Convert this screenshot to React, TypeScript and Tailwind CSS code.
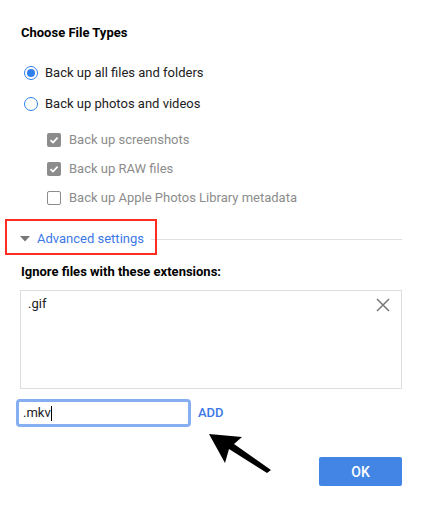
import React from "react";

const Radio = ({ checked, label }: { checked?: boolean; label: string }) => (
  <div className="flex h-[31px] items-center">
    <span className="ml-[4px] flex h-[14px] w-[14px] items-center justify-center rounded-full border-[1.5px] border-[#2f80ed]">
      {checked && <span className="h-[8px] w-[8px] rounded-full bg-[#2f80ed]" />}
    </span>
    <span className="ml-[7px]">{label}</span>
  </div>
);

const Check = ({ checked, label }: { checked?: boolean; label: string }) => (
  <div className="flex h-[29px] items-center">
    <span
      className={
        checked
          ? "ml-[27px] flex h-[14px] w-[14px] items-center justify-center rounded-[2px] bg-[#8c8c8c]"
          : "ml-[27px] h-[14px] w-[14px] rounded-[2px] border border-[#8c8c8c] bg-white"
      }
    >
      {checked && (
        <svg width="10" height="10" viewBox="0 0 10 10">
          <path d="M1.5 5.2 L4 7.6 L8.6 2.6" fill="none" stroke="white" strokeWidth="1.7" />
        </svg>
      )}
    </span>
    <span className="ml-[8px] text-[#8c8c8c]">{label}</span>
  </div>
);

export default function App() {
  return (
    <div className="relative h-[508px] w-[422px] overflow-hidden bg-white font-['Roboto',sans-serif] text-[13px] leading-[18px] text-[#212121]">
      <div className="px-[20px] pt-[24px]">
        <h2 className="pl-px text-[13px] font-bold leading-[18px] text-black">Choose File Types</h2>

        <div className="mt-[15px]">
          <Radio checked label="Back up all files and folders" />
          <Radio label="Back up photos and videos" />
        </div>

        <div className="mt-[6px]">
          <Check checked label="Back up screenshots" />
          <Check checked label="Back up RAW files" />
          <Check label="Back up Apple Photos Library metadata" />
        </div>

        <div className="relative mt-[13px] flex h-[28px] items-center">
          <svg width="10" height="6" viewBox="0 0 10 6" className="shrink-0">
            <path d="M0 0 L10 0 L5 5.5 Z" fill="#777" />
          </svg>
          <span className="ml-[7px] text-[#3b78e7]">Advanced settings</span>
          <span className="ml-[7px] h-px flex-1 bg-[#e0e0e0]" />
          <span className="absolute left-[-15px] top-[-6px] h-[36px] w-[152px] border-2 border-[#ff2d1f]" />
        </div>

        <div className="mt-[10px] pl-px font-bold text-black">Ignore files with these extensions:</div>

        <div className="relative mt-[9px] h-[99px] border border-[#dedede] px-[7px] pt-[4px]">
          <span>.gif</span>
          <svg width="14" height="14" viewBox="0 0 14 14" className="absolute right-[11px] top-[7px]">
            <path d="M1 1 L13 13 M13 1 L1 13" stroke="#777" strokeWidth="1.5" />
          </svg>
        </div>

        <div className="mt-[10px] flex items-center">
          <div className="-ml-[4px] flex h-[28px] w-[175px] items-center rounded-[4px] border-[3px] border-[#86aff2] px-[4px]">
            <span>.mkv</span>
            <span className="h-[15px] w-px bg-black" />
          </div>
          <button className="ml-[7px] font-medium text-[#3b78e7]">ADD</button>
        </div>

        <div className="mt-[30px] flex justify-end">
          <button className="h-[29px] w-[83px] rounded-[2px] bg-[#4285e4] text-[14px] font-medium text-white">
            OK
          </button>
        </div>
      </div>

      <svg width="70" height="45" viewBox="0 0 70 45" className="absolute left-[205px] top-[430px]">
        <path d="M4 4 L37 7 L29 14 L66 40 L62 43 L24 19 L20 33 Z" fill="#000" />
      </svg>
    </div>
  );
}
